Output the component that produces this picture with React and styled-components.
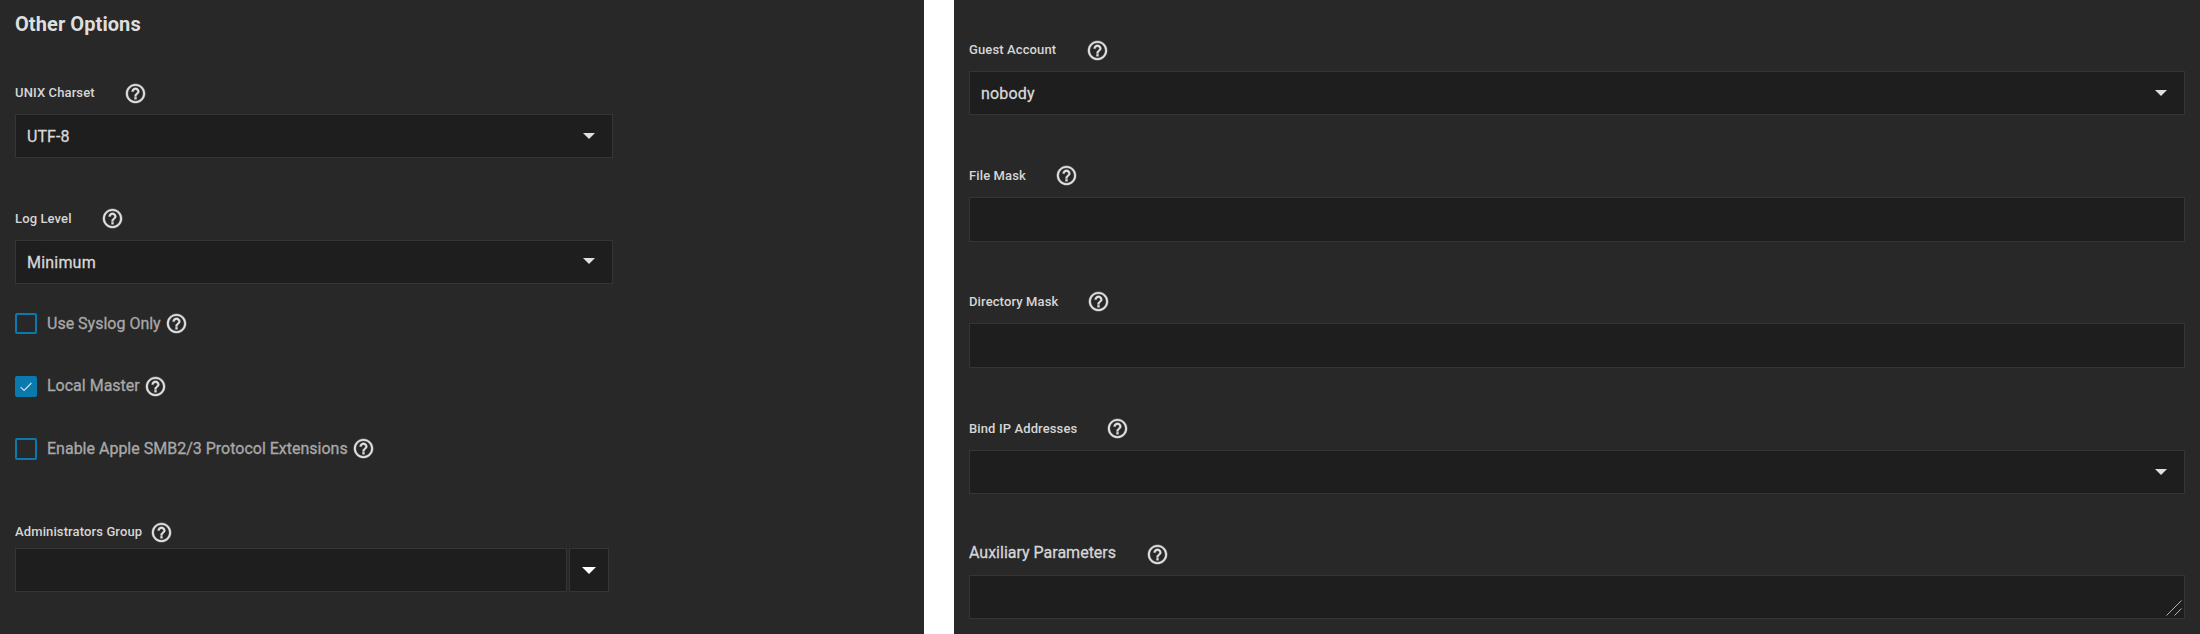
import React from "react";
import styled, { createGlobalStyle } from "styled-components";
import { MdHelpOutline } from "react-icons/md";

const GlobalStyle = createGlobalStyle`
  * { box-sizing: border-box; }
  body { margin: 0; background: #fff; font-family: Roboto, "Liberation Sans", sans-serif; }
`;

const Page = styled.main`
  display: grid;
  grid-template-columns: 924px 1246px;
  column-gap: 30px;
  height: 634px;
  overflow: hidden;
`;

const Panel = styled.section`
  display: flex;
  flex-direction: column;
  align-items: flex-start;
  padding: ${(p) => p.$top}px 15px 0;
  background: #282828;
`;

const Title = styled.h2`
  margin: 0;
  font-size: 20px;
  font-weight: 700;
  line-height: 24px;
  letter-spacing: 0.08px;
  color: #dedede;
`;

const Field = styled.div`
  width: ${(p) => (p.$width ? `${p.$width}px` : "100%")};
  margin-top: ${(p) => p.$gap || 0}px;
`;

const LabelRow = styled.div`
  display: flex;
  align-items: flex-start;
  height: ${(p) => (p.$compact ? 28 : 33)}px;
`;

const Label = styled.label`
  font-size: ${(p) => (p.$large ? 16 : 13)}px;
  font-weight: ${(p) => (p.$large ? 400 : 500)};
  line-height: 24px;
  height: 24px;
  margin-top: ${(p) => (p.$large ? -1 : 0)}px;
  letter-spacing: ${(p) => (p.$large ? 0 : 0.12)}px;
  -webkit-text-stroke: ${(p) => (p.$large ? 0.3 : 0)}px;
  color: #d6d6d6;
  white-space: nowrap;
`;

const HelpIcon = styled(MdHelpOutline)`
  flex: none;
  width: 23px;
  height: 23px;
  margin-left: ${(p) => p.$gap}px;
  margin-top: ${(p) => p.$drop || 0}px;
  color: #e0e0e0;
  stroke-width: 0.4px;

  path[fill="none"] {
    stroke: none;
  }
`;

const Box = styled.div`
  display: flex;
  align-items: center;
  justify-content: space-between;
  height: ${(p) => p.$height || 44}px;
  width: ${(p) => (p.$width ? `${p.$width}px` : "100%")};
  padding: 0 17px 0 11px;
  border: 1px solid #353535;
  background: #1e1e1e;
`;

const Value = styled.span`
  font-size: 16px;
  line-height: 24px;
  padding-top: 1px;
  letter-spacing: ${(p) => p.$spacing || 0}px;
  -webkit-text-stroke: 0.3px;
  color: #d8d8d8;
`;

const Caret = styled.span`
  width: 0;
  height: 0;
  margin-left: auto;
  margin-bottom: ${(p) => p.$lift || 0}px;
  border: solid transparent;
  border-width: ${(p) => (p.$large ? "7px 7px 0" : "6.5px 6.5px 0")};
  border-top-color: ${(p) => (p.$large ? "#fff" : "#e0e0e0")};
`;

const Combo = styled.div`
  display: flex;
  gap: 2px;
`;

const ComboButton = styled(Box)`
  width: 40px;
  padding: 0 12px;
`;

const CheckRow = styled.div`
  display: flex;
  align-items: flex-start;
  height: 24px;
  margin-top: ${(p) => p.$gap}px;
`;

const Checkbox = styled.span`
  display: flex;
  align-items: center;
  justify-content: center;
  width: 22px;
  height: ${(p) => p.$height || 21}px;
  border: 2px solid #0a7aae;
  border-radius: 2px;
  background: ${(p) => (p.$checked ? "#0a7aae" : "transparent")};
`;

const CheckLabel = styled.span`
  margin-left: 10px;
  font-size: 16px;
  line-height: 24px;
  margin-top: ${(p) => p.$shift || 0}px;
  -webkit-text-stroke: 0.3px;
  color: #a9a9a9;
  white-space: nowrap;
`;

const TextArea = styled(Box)`
  align-items: flex-end;
  justify-content: flex-end;
  padding: 0 2px 2px;
`;

const Grip = () => (
  <svg width="16" height="16" viewBox="0 0 16 16" stroke="#c4c4c4" strokeWidth="0.9" fill="none">
    <path d="M0.5 15.5L15.5 0.5M8.5 15.5L15.5 8.5" />
  </svg>
);

const Tick = () => (
  <svg width="12" height="10" viewBox="0 0 12 10" fill="none" stroke="#d5dde0" strokeWidth="1.2">
    <path d="M0.7 5.1L4.1 8.5L11.4 1" />
  </svg>
);

function LabeledBox({ label, gap, width, height, drop, caret, lift, value, valueSpacing, iconGap = 29 }) {
  return (
    <Field $gap={gap} $width={width}>
      <LabelRow>
        <Label>{label}</Label>
        <HelpIcon $gap={iconGap} $drop={drop} />
      </LabelRow>
      <Box $height={height}>
        {value && <Value $spacing={valueSpacing}>{value}</Value>}
        {caret && <Caret $lift={lift} />}
      </Box>
    </Field>
  );
}

function CheckField({ label, gap, checked, height, shift }) {
  return (
    <CheckRow $gap={gap}>
      <Checkbox $checked={checked} $height={height}>{checked && <Tick />}</Checkbox>
      <CheckLabel $shift={shift}>{label}</CheckLabel>
      <HelpIcon $gap={4} $drop={-1} />
    </CheckRow>
  );
}

export default function App() {
  return (
    <>
      <GlobalStyle />
      <Page>
        <Panel $top={12}>
          <Title>Other Options</Title>
          <LabeledBox label="UNIX Charset" gap={45} width={598} drop={1} caret value="UTF-8" valueSpacing={0.1} />
          <LabeledBox label="Log Level" gap={49} width={598} drop={0} caret lift={2} value="Minimum" valueSpacing={0.2} />
          <CheckField label="Use Syslog Only" gap={29} shift={-1} />
          <CheckField label="Local Master" gap={39} checked shift={-2} />
          <CheckField label="Enable Apple SMB2/3 Protocol Extensions" gap={38} height={22} shift={-1} />
          <Field $gap={58} $width={598}>
            <LabelRow $compact>
              <Label>Administrators Group</Label>
              <HelpIcon $gap={8} $drop={1} />
            </LabelRow>
            <Combo>
              <Box $width={552} />
              <ComboButton><Caret $large /></ComboButton>
            </Combo>
          </Field>
        </Panel>
        <Panel $top={38}>
          <LabeledBox label="Guest Account" drop={1} iconGap={30} caret value="nobody" valueSpacing={0.2} />
          <LabeledBox label="File Mask" gap={49} height={45} drop={0} />
          <LabeledBox label="Directory Mask" gap={48} height={45} drop={0} />
          <LabeledBox label="Bind IP Addresses" gap={49} drop={0} caret />
          <Field $gap={48}>
            <LabelRow>
              <Label $large>Auxiliary Parameters</Label>
              <HelpIcon $gap={30} $drop={1} />
            </LabelRow>
            <TextArea><Grip /></TextArea>
          </Field>
        </Panel>
      </Page>
    </>
  );
}
